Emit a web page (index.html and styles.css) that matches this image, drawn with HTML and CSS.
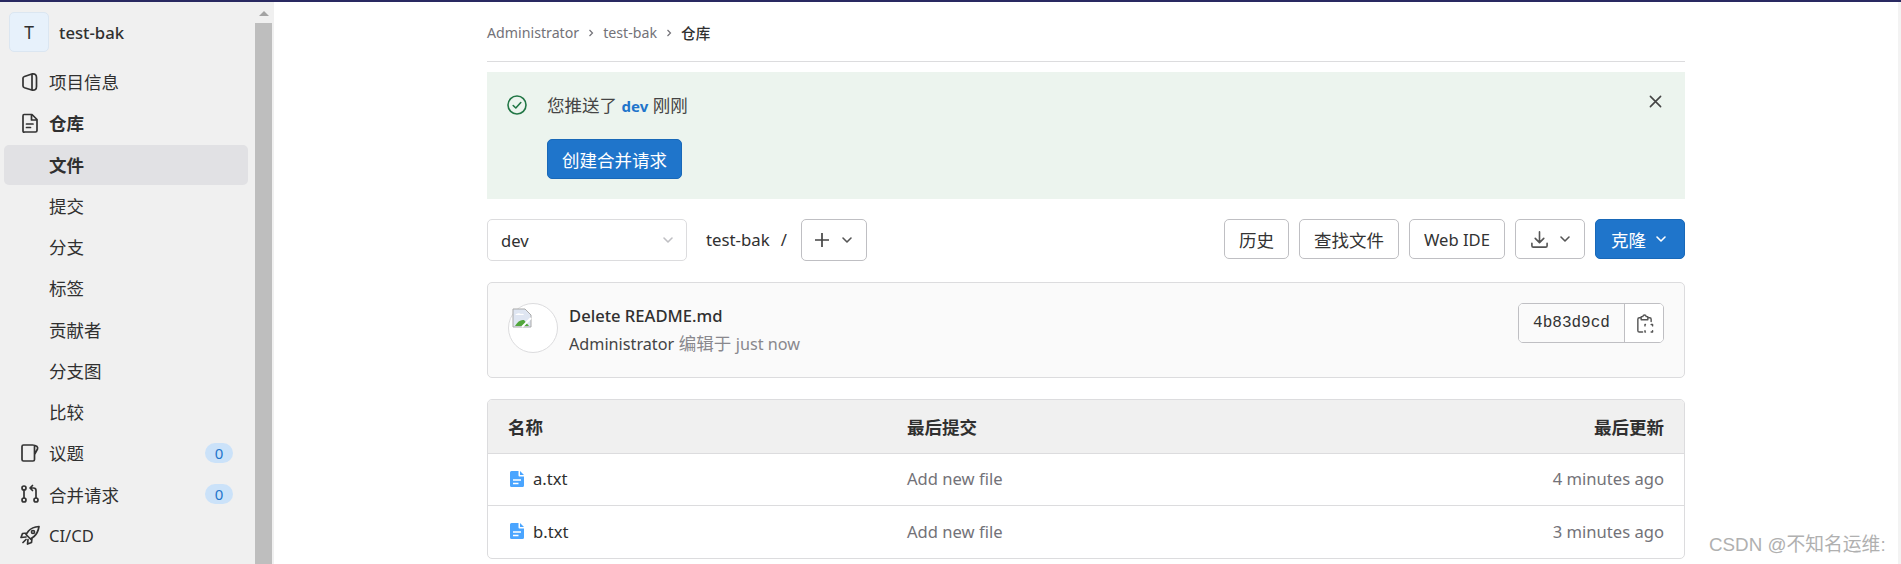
FILE: index.html
```html
<!DOCTYPE html>
<html lang="zh-CN">
<head>
<meta charset="utf-8">
<title>test-bak</title>
<link rel="stylesheet" href="styles.css">
</head>
<body>
<div class="topbar"></div>
<div class="layout">
  <aside class="sidebar">
    <div class="side-scroll">
      <div class="project">
        <div class="project-avatar">T</div>
        <span class="project-name lat">test-bak</span>
      </div>
      <nav class="nav">
        <a class="nav-item"><svg class="nav-icon" viewBox="0 0 20 20"><path d="M4.500 4.500 12.500 1.800Q16.500 1.500 16.500 5.500V14.500Q16.500 18.500 12.500 18.200L4.500 15.800Q3 15.300 3 14V6Q3 5 4.500 4.500ZM12 2V18"/></svg><span>项目信息</span></a>
        <a class="nav-item strong"><svg class="nav-icon" viewBox="0 0 20 20"><path d="M4 1.500h8l5 5v11q0 1.500-1.500 1.500h-11Q3 19.500 3 18V3Q3 1.500 4 1.500ZM11.500 2V7h5M6.500 11h6.500M6.500 14.500h4"/></svg><span>仓库</span></a>
        <a class="nav-item strong active"><span class="nav-gap"></span><span>文件</span></a>
        <a class="nav-item"><span class="nav-gap"></span><span>提交</span></a>
        <a class="nav-item"><span class="nav-gap"></span><span>分支</span></a>
        <a class="nav-item"><span class="nav-gap"></span><span>标签</span></a>
        <a class="nav-item"><span class="nav-gap"></span><span>贡献者</span></a>
        <a class="nav-item"><span class="nav-gap"></span><span>分支图</span></a>
        <a class="nav-item"><span class="nav-gap"></span><span>比较</span></a>
        <a class="nav-item"><svg class="nav-icon" viewBox="0 0 20 20"><path d="M3.500 2h9q2.500 0 4.500 1.500Q18 4.500 17.500 6L14.500 11.500V16.500q0 1.500-1.500 1.500H3.500Q2 18 2 16.500V3.500Q2 2 3.500 2ZM14.500 3.500V11"/></svg><span>议题</span><span class="badge">0</span></a>
        <a class="nav-item"><svg class="nav-icon" viewBox="0 0 20 20"><circle cx="4" cy="4" r="2"/><circle cx="4" cy="16" r="2"/><circle cx="16" cy="16" r="2"/><path d="M4 6V14M16 14V6.500Q16 4 13.500 4H10.500M12.500 1.500 10 4l2.500 2.500"/></svg><span>合并请求</span><span class="badge">0</span></a>
        <a class="nav-item"><svg class="nav-icon" viewBox="0 0 20 20"><path d="M19 1.500Q12 2 8.500 6L6 9.500 10.500 14 14 11.500Q18 8 19 1.500ZM7 8 2.500 8.500 1 12.500 6 12M12 13 11.500 17.500 7.500 19 8 14.500M6 14.500 3 17.500"/><circle cx="13" cy="7" r="1.500"/></svg><span class="lat">CI/CD</span></a>
      </nav>
    </div>
    <div class="scrollbar"><div class="scroll-track"><span class="scroll-arrow"></span></div><div class="scroll-thumb"></div></div>
    <div class="side-edge"></div>
  </aside>

  <main class="main">
    <div class="container">
      <div class="breadcrumb">
        <span class="lat crumb">Administrator</span>
        <svg class="crumb-sep" viewBox="0 0 10 10"><path d="M3.500 2 6.500 5 3.500 8"/></svg>
        <span class="lat crumb">test-bak</span>
        <svg class="crumb-sep" viewBox="0 0 10 10"><path d="M3.500 2 6.500 5 3.500 8"/></svg>
        <span class="crumb-current">仓库</span>
      </div>

      <section class="alert">
        <div class="alert-head">
          <svg class="alert-icon" viewBox="0 0 20 20"><circle cx="10" cy="10" r="9"/><path d="M6.200 10.500 8.800 13 13.800 7.500"/></svg>
          <span class="alert-text">您推送了 <b class="branch lat">dev</b> 刚刚</span>
          <svg class="alert-close" viewBox="0 0 14 14"><path d="M1.500 1.500 12.500 12.500M12.500 1.500 1.500 12.500"/></svg>
        </div>
        <button class="btn primary alert-btn">创建合并请求</button>
      </section>

      <div class="toolbar">
        <div class="branch-select"><span class="lat">dev</span><svg class="chev light" viewBox="0 0 12 12"><path d="M2 4 6 8 10 4"/></svg></div>
        <span class="path lat">test-bak</span>
        <span class="slash lat">/</span>
        <button class="btn add-btn"><svg class="plus" viewBox="0 0 16 16"><path d="M8 1V15M1 8H15"/></svg><svg class="chev" viewBox="0 0 12 12"><path d="M2 4 6 8 10 4"/></svg></button>
        <div class="actions">
          <button class="btn act">历史</button>
          <button class="btn act">查找文件</button>
          <button class="btn act"><span class="lat">Web IDE</span></button>
          <button class="btn act dl"><svg class="dl-icon" viewBox="0 0 20 20"><path d="M10 2V13M5.500 8.800 10 13.300 14.500 8.800M2 14V16.500Q2 18 3.500 18H16.500Q18 18 18 16.500V14"/></svg><svg class="chev" viewBox="0 0 12 12"><path d="M2 4 6 8 10 4"/></svg></button>
          <button class="btn primary act clone">克隆<svg class="chev white" viewBox="0 0 12 12"><path d="M2 4 6 8 10 4"/></svg></button>
        </div>
      </div>

      <section class="commit">
        <div class="commit-avatar">
          <svg class="broken" viewBox="0 0 20 20"><path d="M1 1H13L19 7V19H1Z" fill="#dfe6f2" stroke="#a9a9a9"/><path d="M3 7q3-3 6-1 2-1 3 1H3Z" fill="#fff"/><path d="M3 18q4-7 9-6l5 6Z" fill="#52a63c"/><path d="M19 10 10 19" stroke="#fff" stroke-width="2"/></svg>
        </div>
        <div class="commit-info">
          <div class="commit-title lat">Delete README.md</div>
          <div class="commit-meta"><span class="lat author">Administrator</span> <span class="muted">编辑于 <span class="lat when">just now</span></span></div>
        </div>
        <div class="sha-group">
          <span class="sha">4b83d9cd</span>
          <span class="sha-copy"><svg class="copy-icon" viewBox="0 0 20 20"><path d="M6 4H4.500Q3 4 3 5.500V17.500Q3 19 4.500 19H8M14 4H15.500Q17 4 17 5.500V8M6.500 2.800H8.200Q8.500 1 10 1T11.800 2.800H13.500V6H6.500ZM11 11H10.500V12.500M11 19H10.500V17.500M17 11H18.500V12.500M17 19H18.500V17.500"/></svg></span>
        </div>
      </section>

      <section class="files">
        <div class="file-row head">
          <span class="col-name">名称</span>
          <span class="col-commit">最后提交</span>
          <span class="col-time">最后更新</span>
        </div>
        <div class="file-row">
          <span class="col-name"><svg class="file-icon" viewBox="0 0 14 16"><path d="M1.500 0H8.500V4.500Q8.500 5.500 9.500 5.500H14V14.500Q14 16 12.500 16H1.500Q0 16 0 14.500V1.500Q0 0 1.500 0ZM10 0 14 4H10Z" fill="#4aa5ff"/><path d="M3 9H11M3 12.500H8.500" stroke="#fff" stroke-width="1.500"/></svg><span class="lat">a.txt</span></span>
          <span class="col-commit lat muted2">Add new file</span>
          <span class="col-time lat muted2">4 minutes ago</span>
        </div>
        <div class="file-row">
          <span class="col-name"><svg class="file-icon" viewBox="0 0 14 16"><path d="M1.500 0H8.500V4.500Q8.500 5.500 9.500 5.500H14V14.500Q14 16 12.500 16H1.500Q0 16 0 14.500V1.500Q0 0 1.500 0ZM10 0 14 4H10Z" fill="#4aa5ff"/><path d="M3 9H11M3 12.500H8.500" stroke="#fff" stroke-width="1.500"/></svg><span class="lat">b.txt</span></span>
          <span class="col-commit lat muted2">Add new file</span>
          <span class="col-time lat muted2">3 minutes ago</span>
        </div>
      </section>
    </div>
  </main>
  <div class="page-scroll"></div>
</div>
<div class="watermark">CSDN @不知名运维:</div>
</body>
</html>
```
FILE: styles.css
```css
* { box-sizing: border-box; }
html, body { margin: 0; height: 100%; overflow: hidden; }
body {
  font-family: "Noto Sans", "Noto Sans CJK SC", sans-serif;
  font-size: 17.5px;
  color: #303030;
  background: #fff;
}
.lat { font-size: 16.6px; }
.topbar { height: 2px; background: #292961; }
.layout { display: flex; height: 562px; }

.sidebar { width: 274px; flex: none; display: flex; background: #f0f0f0; overflow: hidden; }
.side-scroll { width: 255px; flex: none; padding: 10px 0 0 4px; }
.project { display: flex; align-items: center; gap: 10px; padding-left: 5px; height: 40px; margin-bottom: 10.5px; }
.project-avatar {
  width: 40px; height: 40px; border-radius: 5px; background: #e7f1fb; border: 1px solid #dbe6f1;
  display: flex; align-items: center; justify-content: center; font-size: 17.5px; color: #303030;
}
.project-name { font-weight: 500; font-size: 16.7px; color: #303030; }
.nav { display: flex; flex-direction: column; gap: 1.25px; width: 244px; }
.nav-item { display: flex; align-items: center; height: 40px; padding: 0 0 2px 16px; border-radius: 5px; color: #303030; }
.nav-icon { width: 20px; height: 20px; margin-right: 9px; flex: none; fill: none; stroke: #333; stroke-width: 1.700; stroke-linejoin: round; stroke-linecap: round; }
.nav-gap { width: 29px; flex: none; }
.strong { font-weight: 700; }
.active { background: #e1e1e4; }
.badge {
  margin-left: auto; margin-right: 15px; width: 28px; height: 20px; border-radius: 10px;
  background: #cbe2f9; color: #1f75cb; font-size: 15px; display: flex; align-items: center; justify-content: center; font-weight: 400;
}
.scrollbar { width: 17px; flex: none; display: flex; flex-direction: column; }
.scroll-track { height: 21px; background: #f0f0f0; display: flex; justify-content: center; padding-top: 9px; }
.scroll-arrow { width: 0; height: 0; border-left: 5px solid transparent; border-right: 5px solid transparent; border-bottom: 5px solid #a3a3a3; }
.scroll-thumb { flex: 1; background: #bebebe; }
.side-edge { width: 2px; flex: none; }

.main { flex: 1; min-width: 0; }
.container { width: 1198px; margin-left: 213px; }
.page-scroll { width: 3px; flex: none; background: #f3f3f3; }

.breadcrumb { height: 60px; border-bottom: 1px solid #dcdcde; display: flex; align-items: center; padding-top: 2px; gap: 4px; }
.crumb { font-size: 14.2px; color: #737278; }
.crumb-sep { width: 10px; height: 10px; margin: 0 3px; fill: none; stroke: #737278; stroke-width: 1.200; }
.crumb-current { font-size: 14.6px; font-weight: 500; color: #303030; }

.alert { margin-top: 10px; height: 127px; background: #ecf4ee; padding: 23px 20px 0; }
.alert-head { display: flex; align-items: center; height: 20px; }
.alert-icon { width: 20px; height: 20px; margin-right: 20px; fill: none; stroke: #217645; stroke-width: 1.600; stroke-linecap: round; stroke-linejoin: round; }
.alert-text { color: #444; margin-top: -2px; }
.branch { color: #1f75cb; font-weight: 700; font-size: 15px; font-family: "Noto Sans", sans-serif; }
.alert-close { width: 13px; height: 13px; margin-left: auto; margin-right: 3px; margin-top: -7px; fill: none; stroke: #444; stroke-width: 1.700; stroke-linecap: round; }
.alert-btn { margin: 24px 0 0 40px; width: 135px; height: 40px; }

.btn {
  display: inline-flex; align-items: center; justify-content: center; height: 40px;
  border: 1px solid #bfbfc3; border-radius: 5px; background: #fff; color: #333;
  font-family: inherit; font-size: 17.5px; padding: 0;
}
.primary { background: #1f75cb; border-color: #1868b8; color: #fff; }

.toolbar { display: flex; align-items: flex-start; margin-top: 20px; height: 42px; }
.branch-select {
  width: 200px; height: 42px; border: 1px solid #dcdcde; border-radius: 5px; padding: 0 12px 0 13px;
  display: flex; align-items: center; justify-content: space-between;
}
.path { margin-left: 19px; line-height: 42px; font-size: 16.8px; }
.slash { margin-left: 11px; line-height: 42px; margin-right: 14px; }
.add-btn { width: 66px; height: 42px; gap: 11px; }
.plus { width: 16px; height: 16px; fill: none; stroke: #444; stroke-width: 1.700; }
.chev { width: 12px; height: 12px; fill: none; stroke: #555; stroke-width: 1.600; stroke-linecap: round; stroke-linejoin: round; }
.chev.light { stroke: #bfbfc3; }
.chev.white { stroke: #fff; margin-left: 9px; }
.actions { margin-left: auto; display: flex; gap: 10px; }
.act:nth-child(1) { width: 65px; }
.act:nth-child(2) { width: 100px; }
.act:nth-child(3) { width: 96px; }
.dl { width: 70px; gap: 10px; }
.clone { width: 90px; padding-right: 2px; }
.dl-icon { width: 19px; height: 19px; fill: none; stroke: #555; stroke-width: 1.700; stroke-linecap: round; stroke-linejoin: round; }

.commit {
  margin-top: 21px; height: 96px; background: #fafafa; border: 1px solid #dcdcde; border-radius: 5px;
  display: flex; align-items: flex-start; padding: 20px 20px 0 20px;
}
.commit-avatar { width: 50px; height: 50px; border-radius: 50%; background: #fff; border: 1px solid #dcdcde; flex: none; padding: 4px 0 0 3px; }
.broken { display: block; width: 20px; height: 20px; }
.commit-info { margin-left: 11px; }
.commit-title { font-weight: 500; font-size: 16.6px; line-height: 26px; color: #303030; }
.commit-meta { line-height: 26px; margin-top: 1px; }
.author { color: #444; font-size: 16.2px; }
.when { font-size: 16.2px; }
.muted { color: #89888d; }
.sha-group { margin-left: auto; display: flex; height: 40px; border: 1px solid #bfbfc3; border-radius: 5px; overflow: hidden; }
.sha { width: 106px; display: flex; align-items: center; justify-content: center; font-family: "Liberation Mono", monospace; font-size: 16px; background: #fafafa; border-right: 1px solid #bfbfc3; color: #333; }
.sha-copy { width: 38px; display: flex; align-items: center; justify-content: center; background: #fff; }
.copy-icon { width: 19px; height: 21px; fill: none; stroke: #555; stroke-width: 1.500; stroke-linecap: round; stroke-linejoin: round; }

.files { margin-top: 21px; height: 160px; border: 1px solid #dcdcde; border-radius: 5px; overflow: hidden; }
.file-row { display: flex; align-items: center; height: 52px; border-bottom: 1px solid #dcdcde; padding: 0 20px 2px 20px; }
.file-row:last-child { border-bottom: 0; }
.head { height: 54px; background: #f0f0f0; font-weight: 700; padding-bottom: 0; }
.col-name { width: 399px; display: flex; align-items: center; }
.col-commit { flex: 1; }
.col-time { text-align: right; }
.muted2 { color: #737278; }
.file-icon { width: 14px; height: 16px; margin: 0 9px 0 2px; flex: none; }

.watermark { position: absolute; left: 1709px; top: 533px; font-family: "Liberation Sans", "Noto Sans CJK SC", sans-serif; font-size: 18.8px; line-height: 24px; color: #b0b0b0; white-space: nowrap; }
```
